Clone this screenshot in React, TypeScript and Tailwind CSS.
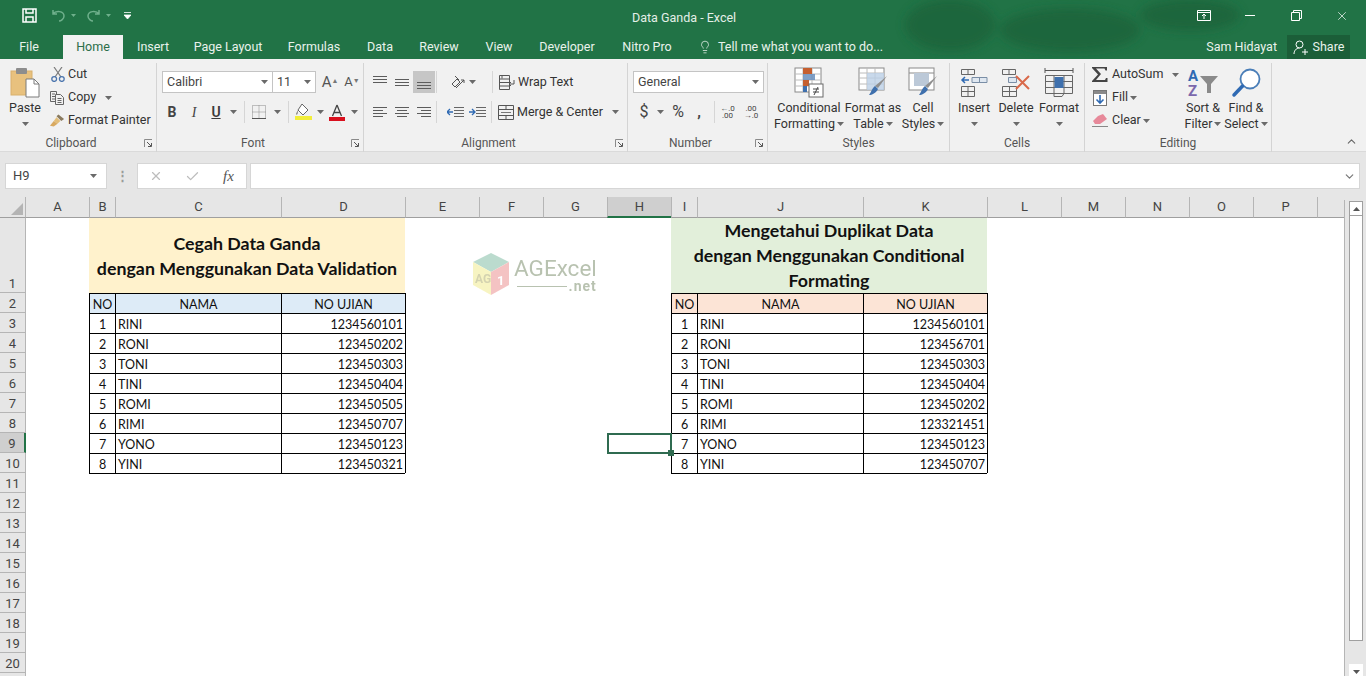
import React from 'react';
import { ChevronDown, ChevronUp, Lightbulb, Check, X } from 'lucide-react';

const UI = "font-['Roboto',sans-serif]";

const Caret = ({ className = '' }: { className?: string }) => (
  <svg width="7" height="4" viewBox="0 0 7 4" className={`shrink-0 ${className}`}>
    <path d="M0 0h7L3.500 4z" fill="#6a6a6a" />
  </svg>
);

const Sep = ({ className = '' }: { className?: string }) => <div className={`w-px h-[22px] bg-[#d6d6d6] shrink-0 ${className}`} />;

const Launcher = () => (
  <svg width="9" height="9" viewBox="0 0 9 9" className="shrink-0">
    <path d="M0.500 8V0.500H8" fill="none" stroke="#8a8a8a" />
    <path d="M3 3l4 4M4 7.500h3.500V4" fill="none" stroke="#555" />
  </svg>
);

/* ribbon group: body on top, caption row at the bottom, divider on the right */
const Group = ({ w, label, launcher, children }: { w: string; label: string; launcher?: boolean; children: React.ReactNode }) => (
  <div className={`${w} shrink-0 flex flex-col h-[89px] mt-[4px] border-r border-[#d4d4d4]`}>
    <div className="h-[73px] flex">{children}</div>
    <div className={`flex items-center h-[14px] relative ${launcher ? 'pr-[14px]' : ''}`}>
      <span className="flex-1 text-center text-[12px] text-[#555]">{label}</span>
      {launcher && <span className="absolute right-[3px] top-[3px]"><Launcher /></span>}
    </div>
  </div>
);

const BigButton = ({ w, icon, l1, l2, caretInline }: { w: string; icon: React.ReactNode; l1: string; l2?: string; caretInline?: boolean }) => (
  <div className={`${w} shrink-0 flex flex-col items-center text-[12.500px] leading-[16px] text-[#333]`}>
    <div className="h-[33px] mt-[3px] flex items-center justify-center">{icon}</div>
    <span className="mt-[1px] whitespace-nowrap">{l1}</span>
    {l2 ? (
      <span className="whitespace-nowrap flex items-center gap-[2px]">{l2}{caretInline && <Caret />}</span>
    ) : (
      <span className="h-[16px] flex items-center"><Caret /></span>
    )}
  </div>
);

const SmallRow = ({ icon, label, caret, iconW = 'w-[18px]' }: { icon: React.ReactNode; label: string; caret?: React.ReactNode; iconW?: string }) => (
  <div className="h-[23px] flex items-center text-[12.500px] text-[#333] whitespace-nowrap">
    <span className={`${iconW} flex justify-center shrink-0`}>{icon}</span>
    <span className="ml-[3px]">{label}</span>
    {caret}
  </div>
);

const Slot = ({ w = 'w-[22px]', on, className = '', children }: { w?: string; on?: boolean; className?: string; children: React.ReactNode }) => (
  <div className={`${w} h-[22px] shrink-0 flex items-center justify-center ${on ? 'bg-[#c6c6c6]' : ''} ${className}`}>{children}</div>
);

const AlignV = ({ rows }: { rows: number[] }) => (
  <svg width="14" height="14" viewBox="0 0 14 14">
    {rows.map(y => <path key={y} d={`M0 ${y}.5H14`} stroke="#5c5c5c" />)}
  </svg>
);

const AlignH = ({ kind }: { kind: 'l' | 'c' | 'r' }) => {
  const rows = [2, 5, 8, 11];
  const span = (i: number) => {
    const len = i % 2 === 0 ? 14 : 10;
    if (kind === 'l') return [0, len];
    if (kind === 'r') return [14 - len, 14];
    return [7 - len / 2, 7 + len / 2];
  };
  return (
    <svg width="14" height="14" viewBox="0 0 14 14">
      {rows.map((y, i) => <path key={y} d={`M${span(i)[0]} ${y}.5H${span(i)[1]}`} stroke="#5c5c5c" />)}
    </svg>
  );
};

const PasteIcon = () => (
  <svg width="30" height="31" viewBox="0 0 30 31">
    <rect x="1" y="4" width="21" height="24" fill="#e8c17e" stroke="#d9b06c" />
    <rect x="6" y="1" width="11" height="6" rx="1" fill="#8d8d8d" />
    <path d="M16 12h8l5 5v13H16z" fill="#fff" stroke="#7a7a7a" />
    <path d="M24 12v5h5" fill="none" stroke="#7a7a7a" />
  </svg>
);

const CutIcon = () => (
  <svg width="14" height="15" viewBox="0 0 14 15" fill="none">
    <path d="M3 0l7 10M11 0L4 10" stroke="#7a7a7a" strokeWidth="1.200" />
    <circle cx="3.200" cy="12" r="2.400" stroke="#4a74ad" strokeWidth="1.300" />
    <circle cx="10.800" cy="12" r="2.400" stroke="#4a74ad" strokeWidth="1.300" />
  </svg>
);

const CopyIcon = () => (
  <svg width="15" height="14" viewBox="0 0 15 14" fill="none" stroke="#666">
    <path d="M.5.500h6v10h-6zM2 3h3M2 5.500h3M2 8h3" />
    <path d="M5.500 3.500h5l3 3v7h-8z" fill="#f1f1f1" />
    <path d="M7.500 7.500h4M7.500 9.500h4M7.500 11.500h4" />
  </svg>
);

const PainterIcon = () => (
  <svg width="16" height="15" viewBox="0 0 16 15">
    <path d="M9 1l6 5-3 2-5-5z" fill="#8a7a5e" />
    <path d="M7 4l4 4-3 3-4-3z" fill="#e3bd78" />
    <path d="M4 8l4 3-4 3-4-1z" fill="#d8a960" />
  </svg>
);

const FillIcon = () => (
  <svg width="17" height="18" viewBox="0 0 17 18">
    <path d="M7 1l6 6-5 5-5-5z" fill="#fff" stroke="#666" />
    <path d="M3 7c-1 2-2 3-2 4s1 1 1.500 0 .5-3 .5-4z" fill="#888" />
    <rect x="0" y="13" width="17" height="4" fill="#f2ee3a" />
  </svg>
);

const FontColorIcon = () => (
  <svg width="16" height="17" viewBox="0 0 16 17">
    <path d="M8 1l-4.500 11M8 1l4.500 11M5 8.500h6" stroke="#444" strokeWidth="1.300" fill="none" />
    <rect x="0" y="13" width="16" height="4" fill="#d9101e" />
  </svg>
);

const BordersIcon = () => (
  <svg width="14" height="14" viewBox="0 0 14 14" fill="none">
    <path d="M.5.500h13v13H.5zM7 .5v13M.5 7h13" stroke="#8a8a8a" strokeDasharray="1 1" />
    <path d="M0 13.500h14" stroke="#555" />
  </svg>
);

const OrientIcon = () => (
  <svg width="16" height="15" viewBox="0 0 16 15" fill="none" stroke="#555">
    <path d="M2 9l5-5 3 3-5 5z" />
    <path d="M5 1l4 4M6 13l8-8M14 5v3M14 5h-3" />
  </svg>
);

const IndentIcon = ({ rev }: { rev?: boolean }) => (
  <svg width="17" height="12" viewBox="0 0 17 12" fill="none">
    <path d="M7 1.500h10M7 4.500h10M7 7.500h10M7 10.500h10" stroke="#666" />
    {rev ? <path d="M0 6h6M3 3L0 6l3 3" stroke="#2f6ab3" strokeWidth="1.300" /> : <path d="M0 6h6M3 3l3 3-3 3" stroke="#2f6ab3" strokeWidth="1.300" />}
  </svg>
);

const WrapIcon = () => (
  <svg width="16" height="15" viewBox="0 0 16 15" fill="none" stroke="#555">
    <path d="M.5.500h10v14H.5zM.5 4h10M.5 7.500h10M.5 11h10M3 .5v3" />
    <path d="M15 5v4h-5M12 7L10 9l2 2" />
  </svg>
);

const MergeIcon = () => (
  <svg width="16" height="15" viewBox="0 0 16 15" fill="none" stroke="#555">
    <path d="M.5.500h15v14H.5zM.5 4.500h15M.5 10.500h15M8 .5v4M8 10.500v4" />
    <path d="M3 7.500h10" stroke="#777" />
  </svg>
);

const CondIcon = () => (
  <svg width="30" height="31" viewBox="0 0 30 31">
    <rect x="1" y="1" width="26" height="24" fill="#fff" stroke="#8a8a8a" />
    <path d="M1 7h26M1 13h26M1 19h26M9 1v24M18 1v24" stroke="#bcbcbc" />
    <rect x="9" y="1" width="9" height="6" fill="#c55f2f" />
    <rect x="9" y="7" width="12" height="6" fill="#6a8fbd" opacity=".85" />
    <rect x="9" y="13" width="6" height="6" fill="#c55f2f" />
    <rect x="9" y="19" width="4" height="6" fill="#3f70ad" />
    <rect x="15" y="17" width="14" height="13" fill="#fff" stroke="#6a6a6a" />
    <path d="M19 22h6M19 25h6M24 20l-4 8" stroke="#444" fill="none" />
  </svg>
);

const TableBrushIcon = () => (
  <svg width="30" height="31" viewBox="0 0 30 31">
    <rect x="1" y="1" width="25" height="22" fill="#fff" stroke="#8a8a8a" />
    <path d="M1 6h25M1 11h25M1 17h25M9 1v22M17 1v22" stroke="#bcbcbc" />
    <rect x="9" y="6" width="17" height="17" fill="#bcd0e6" opacity=".8" />
    <path d="M29 9l-9 12-3-2z" fill="#8f8f8f" />
    <path d="M17 19l3 3c-2 4-6 6-9 6 2-2 3-7 6-9z" fill="#3f70ad" />
  </svg>
);

const CellStyleIcon = () => (
  <svg width="30" height="31" viewBox="0 0 30 31">
    <rect x="1" y="1" width="25" height="22" fill="#fff" stroke="#8a8a8a" />
    <path d="M1 6h25" stroke="#8a8a8a" />
    <rect x="6" y="6" width="15" height="13" fill="#bcc9d8" />
    <path d="M29 9l-9 12-3-2z" fill="#8f8f8f" />
    <path d="M17 19l3 3c-2 4-6 6-9 6 2-2 3-7 6-9z" fill="#3f70ad" />
  </svg>
);

const InsertIcon = () => (
  <svg width="28" height="30" viewBox="0 0 28 30" fill="none">
    <path d="M1.500 1.500h13v5h-13zM8 1.500v5M1.500 18.500h13v10h-13zM8 18.500v10M1.500 23.500h13" stroke="#666" />
    <path d="M12 9.500h15v5H12zM19.500 9.500v5" stroke="#7a8ea6" fill="#dfe7f0" />
    <path d="M2 12h7M5 9l-3 3 3 3" stroke="#2f6ab3" strokeWidth="1.500" />
  </svg>
);

const DeleteIcon = () => (
  <svg width="30" height="30" viewBox="0 0 30 30" fill="none">
    <path d="M1.500 1.500h13v5h-13zM8 1.500v5M1.500 18.500h14v10h-14zM8.500 18.500v10M1.500 23.500h14" stroke="#666" />
    <path d="M7.500 9.500h8v5h-8z" stroke="#7a8ea6" fill="#dfe7f0" />
    <path d="M15 8l13 13M28 8L15 21" stroke="#d9694a" strokeWidth="2" />
  </svg>
);

const FormatIcon = () => (
  <svg width="30" height="31" viewBox="0 0 30 31" fill="none">
    <path d="M1 1v5M29 1v5M1 3.500h28" stroke="#555" />
    <path d="M1.500 8.500h27v18h-27zM1.500 14.500h27M1.500 20.500h27M10 8.500v18M20 8.500v18" stroke="#666" />
    <rect x="10.500" y="10" width="9" height="11" fill="#3f70ad" />
    <path d="M10 26.500v3h8l2-3" stroke="#666" />
  </svg>
);

const SigmaIcon = () => (
  <svg width="16" height="15" viewBox="0 0 16 15">
    <path d="M0 0h15v3.500h-1.500l-1-2H4l5 5.500-5 6h9l1-2H15.500V15H0v-1l6-6.500L0 1z" fill="#444" />
  </svg>
);

const FillDownIcon = () => (
  <svg width="14" height="16" viewBox="0 0 14 16" fill="none">
    <rect x=".5" y=".5" width="13" height="15" fill="#fff" stroke="#777" />
    <rect x="1" y="1" width="12" height="3" fill="#8a8a8a" />
    <path d="M7 5v8M3.500 9.500L7 13l3.500-3.500" stroke="#2f6ab3" strokeWidth="1.600" />
  </svg>
);

const ClearIcon = () => (
  <svg width="16" height="14" viewBox="0 0 16 14">
    <path d="M6 2l5-2 4 5-7 5H3L1 7z" fill="#e7899a" />
    <path d="M0 12.500h16" stroke="#888" />
  </svg>
);

const SortIcon = () => (
  <svg width="32" height="30" viewBox="0 0 32 30">
    <text x="1" y="13" fontSize="15" fontWeight="700" fill="#2f6ab3" fontFamily="Roboto, sans-serif">A</text>
    <text x="1" y="28" fontSize="15" fontWeight="700" fill="#7b68ac" fontFamily="Roboto, sans-serif">Z</text>
    <path d="M13 8h18l-7 8v9h-4v-9z" fill="#8a8a8a" />
  </svg>
);

const FindIcon = () => (
  <svg width="30" height="30" viewBox="0 0 30 30" fill="none">
    <circle cx="19" cy="11" r="9.500" stroke="#4a7eb8" strokeWidth="1.800" fill="#fff" />
    <path d="M11.500 18L3 27" stroke="#2f6ab3" strokeWidth="3.500" strokeLinecap="round" />
  </svg>
);

const TitleBar = () => (
  <div className="relative h-[35px] flex items-center pb-[4px] text-white">
    <div className="flex items-center ml-[22px]">
      <svg width="15" height="15" viewBox="0 0 15 15" fill="none" stroke="#fff" strokeWidth="1.500">
        <path d="M1 1h13v13H1z" />
        <path d="M4 1v4h7V1M4 14V9h7v5" />
      </svg>
      <svg width="15" height="13" viewBox="0 0 15 13" fill="none" stroke="#6fb08c" strokeWidth="1.500" className="ml-[14px]">
        <path d="M2 1v4h4M2 5c3-4 11-3 11 2 0 3-3 5-5 5" />
      </svg>
      <svg width="5" height="3" viewBox="0 0 5 3" className="ml-[5px]"><path d="M0 0h5L2.500 3z" fill="#6fb08c" /></svg>
      <svg width="15" height="13" viewBox="0 0 15 13" fill="none" stroke="#6fb08c" strokeWidth="1.500" className="ml-[10px]">
        <path d="M13 1v4H9M13 5C10 1 2 2 2 7c0 3 3 5 5 5" />
      </svg>
      <svg width="5" height="3" viewBox="0 0 5 3" className="ml-[5px]"><path d="M0 0h5L2.500 3z" fill="#6fb08c" /></svg>
      <svg width="7" height="7" viewBox="0 0 7 7" className="ml-[13px]"><path d="M0 .5h7M0 3h7L3.500 7z" stroke="#fff" strokeWidth=".8" fill="#fff" /></svg>
    </div>
    <div className="absolute left-[632px] top-[9px] text-[12.500px] text-[#e4efe8] whitespace-nowrap">Data Ganda - Excel</div>
    <div className="ml-auto flex items-center text-white">
      <span className="w-[46px] flex justify-center">
        <svg width="14" height="11" viewBox="0 0 14 11" fill="none" stroke="#fff"><path d="M.5.500h13v10H.5zM.5 2.500h13M7 9V4M5 6l2-2 2 2" /></svg>
      </span>
      <span className="w-[46px] flex justify-center"><span className="w-[10px] h-px bg-white" /></span>
      <span className="w-[46px] flex justify-center">
        <svg width="11" height="11" viewBox="0 0 11 11" fill="none" stroke="#fff"><path d="M.5 2.500h8v8h-8zM2.500 2.500v-2h8v8h-2" /></svg>
      </span>
      <span className="w-[46px] flex justify-center mr-[1px]"><X size={14} strokeWidth={1.2} /></span>
    </div>
  </div>
);

const tabs: [string, string][] = [
  ['Insert', 'w-[60px]'],
  ['Page Layout', 'w-[90px]'],
  ['Formulas', 'w-[82px]'],
  ['Data', 'w-[50px]'],
  ['Review', 'w-[68px]'],
  ['View', 'w-[52px]'],
  ['Developer', 'w-[84px]'],
  ['Nitro Pro', 'w-[76px]'],
];

const TabBar = () => (
  <div className="h-[24px] flex items-stretch text-[12.500px] text-[#e9f2ec] leading-[24px]">
    <span className="w-[58px] text-center">File</span>
    <span className="ml-[5px] w-[60px] text-center bg-[#f1f1f1] text-[#2c6e49]">Home</span>
    {tabs.map(([t, w]) => <span key={t} className={`${w} text-center`}>{t}</span>)}
    <span className="ml-[13px] flex items-center"><Lightbulb size={14} strokeWidth={1.3} /></span>
    <span className="ml-[6px] whitespace-nowrap">Tell me what you want to do...</span>
    <span className="ml-auto whitespace-nowrap">Sam Hidayat</span>
    <span className="ml-[10px] mr-[16px] w-[63px] flex items-center justify-center gap-[5px] bg-[#1b5e38]">
      <svg width="15" height="15" viewBox="0 0 15 15" fill="none" stroke="#fff"><circle cx="6.500" cy="4.500" r="3.500" /><path d="M1 14c0-3 2-6 5.500-6M9 12h6M12 9v6" /></svg>
      Share
    </span>
  </div>
);

const Ribbon = () => (
  <div className="h-[93px] bg-[#f1f1f1] flex relative text-[#333] border-b border-[#dadada]">
    <Group w="w-[157px]" label="Clipboard" launcher>
      <BigButton w="w-[50px]" icon={<PasteIcon />} l1="Paste" />
      <div>
        <SmallRow icon={<CutIcon />} label="Cut" iconW="w-[15px]" />
        <SmallRow icon={<CopyIcon />} label="Copy" iconW="w-[15px]" caret={<Caret className="ml-[9px]" />} />
        <SmallRow icon={<PainterIcon />} label="Format Painter" iconW="w-[15px]" />
      </div>
    </Group>
    <Group w="w-[207px]" label="Font" launcher>
      <div className="pl-[5px] pt-[8px]">
        <div className="flex items-center h-[22px]">
          <div className="w-[111px] h-[22px] bg-white border border-[#c4c4c4] flex items-center px-[4px] text-[12.500px] text-[#444]">
            Calibri<Caret className="ml-auto" />
          </div>
          <div className="w-[43px] h-[22px] bg-white border border-l-0 border-[#c4c4c4] flex items-center px-[4px] text-[12.500px] text-[#444]">
            11<Caret className="ml-auto" />
          </div>
          <span className="ml-[3px] w-[22px] text-center text-[15px] text-[#555]">A<sup className="text-[7px] text-[#777]">▲</sup></span>
          <span className="w-[22px] text-center text-[13px] text-[#555]">A<sup className="text-[7px] text-[#777]">▼</sup></span>
        </div>
        <div className="flex items-center h-[22px] mt-[8px] -ml-[1px]">
          <Slot><span className="text-[14px] font-bold text-[#444]">B</span></Slot>
          <Slot><span className="text-[14px] italic text-[#444] font-['Liberation_Serif',serif]">I</span></Slot>
          <Slot><span className="text-[14px] font-semibold underline text-[#3c3c3c]">U</span></Slot>
          <Slot w="w-[12px]"><Caret /></Slot>
          <Sep className="ml-[5px]" />
          <Slot w="w-[28px]"><BordersIcon /></Slot>
          <Slot w="w-[8px]"><Caret /></Slot>
          <Sep className="ml-[7px]" />
          <Slot w="w-[28px]"><FillIcon /></Slot>
          <Slot w="w-[6px]"><Caret /></Slot>
          <Slot w="w-[28px]"><FontColorIcon /></Slot>
          <Slot w="w-[6px]"><Caret /></Slot>
        </div>
      </div>
    </Group>
    <Group w="w-[264px]" label="Alignment" launcher>
      <div className="pl-[5px] pt-[8px]">
        <div className="flex items-center h-[22px]">
          <Slot><AlignV rows={[1, 4, 7]} /></Slot>
          <Slot><AlignV rows={[4, 7, 10]} /></Slot>
          <Slot on><AlignV rows={[7, 10, 13]} /></Slot>
          <Sep className="ml-[1px]" />
          <Slot w="w-[20px]" className="ml-[11px]"><OrientIcon /></Slot>
          <Slot w="w-[8px]"><Caret /></Slot>
          <Sep className="ml-[16px]" />
          <div className="ml-[6px]"><SmallRow icon={<WrapIcon />} label="Wrap Text" iconW="w-[16px]" /></div>
        </div>
        <div className="flex items-center h-[22px] mt-[8px]">
          <Slot><AlignH kind="l" /></Slot>
          <Slot><AlignH kind="c" /></Slot>
          <Slot><AlignH kind="r" /></Slot>
          <Sep className="ml-[1px]" />
          <Slot className="ml-[7px]"><IndentIcon rev /></Slot>
          <Slot><IndentIcon /></Slot>
          <Sep className="ml-[3px]" />
          <div className="ml-[6px]"><SmallRow icon={<MergeIcon />} label="Merge & Center" iconW="w-[16px]" caret={<Caret className="ml-[9px]" />} /></div>
        </div>
      </div>
    </Group>
    <Group w="w-[140px]" label="Number" launcher>
      <div className="pl-[5px] pt-[8px]">
        <div className="w-[131px] h-[22px] bg-white border border-[#c4c4c4] flex items-center px-[4px] text-[12.500px] text-[#444]">
          General<Caret className="ml-auto" />
        </div>
        <div className="flex items-center h-[22px] mt-[8px] text-[#444]">
          <Slot><span className="text-[16px]">$</span></Slot>
          <Slot w="w-[10px]"><Caret /></Slot>
          <Slot w="w-[26px]"><span className="text-[16px]">%</span></Slot>
          <Slot w="w-[16px]"><span className="text-[15px] font-bold leading-none">,</span></Slot>
          <Sep className="ml-[7px]" />
          <Slot w="w-[25px]"><span className="text-[8px] leading-[7px] text-center whitespace-pre">{'←.0\n.00'}</span></Slot>
          <Slot><span className="text-[8px] leading-[7px] text-center whitespace-pre">{'.00\n→.0'}</span></Slot>
        </div>
      </div>
    </Group>
    <Group w="w-[182px]" label="Styles">
      <BigButton w="w-[82px]" icon={<CondIcon />} l1="Conditional" l2="Formatting" caretInline />
      <BigButton w="w-[46px]" icon={<TableBrushIcon />} l1="Format as" l2="Table" caretInline />
      <BigButton w="w-[54px]" icon={<CellStyleIcon />} l1="Cell" l2="Styles" caretInline />
    </Group>
    <Group w="w-[135px]" label="Cells">
      <BigButton w="w-[48px]" icon={<InsertIcon />} l1="Insert" />
      <BigButton w="w-[36px]" icon={<DeleteIcon />} l1="Delete" />
      <BigButton w="w-[50px]" icon={<FormatIcon />} l1="Format" />
    </Group>
    <Group w="w-[187px]" label="Editing">
      <div className="pl-[6px] w-[97px]">
        <SmallRow icon={<SigmaIcon />} label="AutoSum" caret={<Caret className="ml-[9px]" />} />
        <SmallRow icon={<FillDownIcon />} label="Fill" caret={<Caret className="ml-[2px]" />} />
        <SmallRow icon={<ClearIcon />} label="Clear" caret={<Caret className="ml-[2px]" />} />
      </div>
      <BigButton w="w-[42px]" icon={<SortIcon />} l1="Sort &" l2="Filter" caretInline />
      <BigButton w="w-[44px]" icon={<FindIcon />} l1="Find &" l2="Select" caretInline />
    </Group>
    <ChevronUp size={13} strokeWidth={2} className="absolute right-[8px] bottom-[3px] text-[#666]" />
  </div>
);

const FormulaBar = () => (
  <div className="h-[45px] bg-[#e6e6e6] flex pt-[11px] text-[13px] text-[#444]">
    <div className="ml-[5px] w-[102px] h-[26px] bg-white border border-[#d6d6d6] flex items-center px-[7px]">
      H9<Caret className="ml-auto mr-[2px]" />
    </div>
    <div className="w-[30px] h-[26px] flex items-center justify-center text-[#9a9a9a] text-[13px] font-bold">⋮</div>
    <div className="w-[110px] h-[26px] bg-white border border-[#d6d6d6] flex items-center">
      <X size={14} strokeWidth={2} className="ml-[11px] text-[#bdbdbd]" />
      <Check size={15} strokeWidth={2} className="ml-[22px] text-[#bdbdbd]" />
      <span className="ml-[23px] text-[15px] italic text-[#555] font-['Liberation_Serif',serif]">fx</span>
    </div>
    <div className="ml-[3px] w-[1110px] h-[26px] bg-white border border-[#d6d6d6] flex items-center justify-end pr-[3px]">
      <ChevronDown size={13} strokeWidth={2.2} className="text-[#777]" />
    </div>
  </div>
);

const columns = ['A', 'B', 'C', 'D', 'E', 'F', 'G', 'H', 'I', 'J', 'K', 'L', 'M', 'N', 'O', 'P', ''];

const leftRows: [string, string][] = [
  ['RINI', '1234560101'], ['RONI', '123450202'], ['TONI', '123450303'], ['TINI', '123450404'],
  ['ROMI', '123450505'], ['RIMI', '123450707'], ['YONO', '123450123'], ['YINI', '123450321'],
];
const rightRows: [string, string][] = [
  ['RINI', '1234560101'], ['RONI', '123456701'], ['TONI', '123450303'], ['TINI', '123450404'],
  ['ROMI', '123450202'], ['RIMI', '123321451'], ['YONO', '123450123'], ['YINI', '123450707'],
];

const SHEET = "font-['Lato',sans-serif] text-[12.500px] text-[#111]";

const Logo = () => (
  <div className="flex items-center opacity-60 -ml-[8px] -mb-[3px]">
    <svg width="40" height="44" viewBox="0 0 40 44">
      <path d="M20 1l18 9-18 10L2 10z" fill="#8fc4ae" />
      <path d="M2 10l18 10v23L2 33z" fill="#f3ee9a" />
      <path d="M38 10L20 20v23l18-10z" fill="#ee9c9c" />
      <text x="4" y="31" fontSize="12" fontWeight="700" fill="#b9b77d" fontFamily="Roboto, sans-serif">AG</text>
      <text x="26" y="33" fontSize="13" fontWeight="700" fill="#fff" fontFamily="Roboto, sans-serif">1</text>
    </svg>
    <div className="ml-[3px] flex flex-col">
      <span className="font-['Roboto',sans-serif] text-[22.500px] leading-[24px] text-[#8a9a7c]">AGExcel</span>
      <span className="flex items-center justify-end gap-[2px]">
        <span className="w-[50px] h-px bg-[#8a9a7c]" />
        <span className="font-['Roboto',sans-serif] font-bold text-[14px] leading-[13px] text-[#8a9a7c] tracking-[1px]">.net</span>
      </span>
    </div>
  </div>
);

const RowHead = ({ n, h }: { n: number; h: string }) => (
  <div className={`${h} ${UI} w-[26px] flex items-end justify-center leading-[16px] text-[13px] text-[#444] border-b border-r border-[#b5b5b5] ${n === 9 ? 'bg-[#cfcfcf] border-r-2 border-r-[#217346] text-[#1d5c38]' : 'bg-[#e6e6e6]'}`}>
    {n <= 20 ? n : ''}
  </div>
);

const tableRow = (no: number, name: string, val: string) => [
  <div key="n" className="border-l border-t border-black text-center leading-[21px] h-[20px]">{no}</div>,
  <div key="m" className="border-l border-t border-black pl-[2px] leading-[21px] h-[20px]">{name}</div>,
  <div key="v" className="border-l border-t border-black pr-[2px] text-right leading-[21px] h-[20px]">{val}</div>,
];

const headRow = (bg: string) => [
  <div key="n" className={`border-l border-t border-black ${bg} text-center leading-[21px] h-[20px]`}>NO</div>,
  <div key="m" className={`border-l border-t border-black ${bg} text-center leading-[21px] h-[20px]`}>NAMA</div>,
  <div key="v" className={`border-l border-t border-black ${bg} text-center leading-[21px] h-[20px]`}>NO UJIAN</div>,
];

const Closing = () => (
  <>
    <div className="border-t border-black h-[20px]" />
    <div className="border-t border-black h-[20px]" />
    <div className="border-t border-black h-[20px]" />
  </>
);

const Blank = ({ edge }: { edge?: boolean }) => <div className={`h-[20px] ${edge ? 'border-l border-black' : ''}`} />;

const Scrollbar = () => (
  <div className="w-[22px] flex flex-col">
    <div className="h-[3px] bg-[#e6e6e6]" />
    <div className="flex-1 bg-[#e6e6e6] border-l border-[#b5b5b5] pl-[4px] pr-[3px] flex flex-col overflow-hidden">
      <div className="h-[15px] mt-[1px] shrink-0 bg-white border border-[#9f9f9f] flex items-center justify-center">
        <svg width="7" height="4" viewBox="0 0 7 4"><path d="M0 4h7L3.500 0z" fill="#555" /></svg>
      </div>
      <div className="h-[425px] shrink-0 bg-white border border-t-0 border-[#9f9f9f]" />
      <div className="h-[15px] mt-[23px] shrink-0 bg-white flex items-center justify-center">
        <svg width="7" height="4" viewBox="0 0 7 4"><path d="M0 0h7L3.500 4z" fill="#555" /></svg>
      </div>
    </div>
  </div>
);

const Sheet = () => (
  <div className="flex-1 flex overflow-hidden min-h-0">
    <div className={`w-[1344px] grid grid-cols-[25px_64px_26px_166px_124px_74px_64px_64px_64px_26px_166px_124px_74px_64px_64px_64px_64px_27px] auto-rows-min content-start ${SHEET}`}>
      {/* column headers */}
      <div className="h-[21px] bg-[#e6e6e6] border-b border-[#9f9f9f] flex items-end justify-end pb-[2px] pr-[2px]">
        <svg width="12" height="12" viewBox="0 0 12 12"><path d="M12 0v12H0z" fill="#b4b4b4" /></svg>
      </div>
      {columns.map((c, i) => (
        <div key={i} className={`${UI} h-[21px] flex items-center justify-center text-[13px] text-[#444] border-l border-l-[#b5b5b5] border-b ${c === 'H' ? 'bg-[#cfcfcf] border-b-2 border-b-[#217346] text-[#1d5c38]' : 'bg-[#e6e6e6] border-b-[#9f9f9f]'}`}>
          {c}
        </div>
      ))}

      {/* row 1 */}
      <RowHead n={1} h="h-[75px]" />
      <div />
      <div className="col-span-3 h-[75px] bg-[#fff2cc] flex flex-col items-center justify-center text-[17.800px] leading-[25px] font-bold text-[#111]">
        <span>Cegah Data Ganda</span>
        <span>dengan Menggunakan Data Validation</span>
      </div>
      <div />
      <div className="col-span-3 flex items-end justify-start"><Logo /></div>
      <div className="col-span-3 h-[75px] bg-[#e2efda] flex flex-col items-center justify-center text-[17.800px] leading-[25px] font-bold text-[#111]">
        <span>Mengetahui Duplikat Data</span>
        <span>dengan Menggunakan Conditional</span>
        <span>Formating</span>
      </div>
      <div className="col-span-6" />

      {Array.from({ length: 20 }, (_, i) => i + 2).map(n => {
        const inTable = n <= 10;
        const headerRow = n === 2;
        const idx = n - 3;
        return (
          <React.Fragment key={n}>
            <RowHead n={n} h="h-[20px]" />
            <Blank />
            {inTable
              ? headerRow ? headRow('bg-[#ddebf7]') : tableRow(idx + 1, leftRows[idx][0], leftRows[idx][1])
              : n === 11 ? <Closing /> : <><Blank /><Blank /><Blank /></>}
            <Blank edge={inTable} />
            <Blank />
            <Blank />
            {n === 9 ? (
              <div className="h-[21px] -mb-px border-2 border-[#2f6b50] relative z-10 w-[65px]">
                <span className="absolute -right-[4px] -bottom-[4px] w-[6px] h-[6px] bg-[#2f6b50]" />
              </div>
            ) : <Blank />}
            {inTable
              ? headerRow ? headRow('bg-[#fce4d6]') : tableRow(idx + 1, rightRows[idx][0], rightRows[idx][1])
              : n === 11 ? <Closing /> : <><Blank /><Blank /><Blank /></>}
            <Blank edge={inTable} />
            <div className="col-span-5" />
          </React.Fragment>
        );
      })}
    </div>
    <Scrollbar />
  </div>
);

export default function App() {
  return (
    <div className={`w-[1366px] h-[676px] overflow-hidden flex flex-col bg-white ${UI}`}>
      <div className="relative bg-[#217346] overflow-hidden">
        <svg className="absolute left-[880px] top-0 pointer-events-none" width="400" height="59" viewBox="0 0 400 59">
          <defs><filter id="b"><feGaussianBlur stdDeviation="5" /></filter></defs>
          <g fill="#1a643b" filter="url(#b)" opacity=".8">
            <ellipse cx="70" cy="25" rx="45" ry="26" />
            <ellipse cx="190" cy="30" rx="70" ry="22" />
            <ellipse cx="310" cy="15" rx="50" ry="16" />
          </g>
        </svg>
        <div className="relative">
          <TitleBar />
          <TabBar />
        </div>
      </div>
      <Ribbon />
      <FormulaBar />
      <Sheet />
    </div>
  );
}
